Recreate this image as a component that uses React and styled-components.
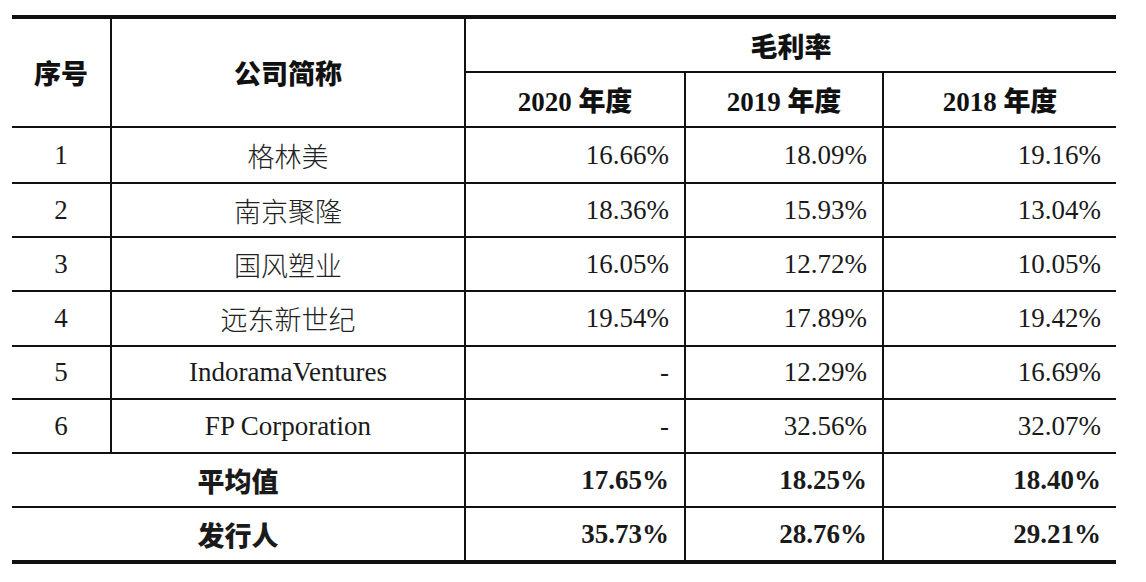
import React from "react";
import styled, { createGlobalStyle } from "styled-components";

const GlobalStyle = createGlobalStyle`
  html, body {
    margin: 0;
    padding: 0;
    background: #fff;
  }
`;

const Page = styled.div`
  padding: 15px 0 0 12px;
  width: 1146px;
  height: 582px;
  box-sizing: border-box;
  overflow: hidden;
`;

const Table = styled.table`
  width: 1104px;
  table-layout: fixed;
  border-collapse: collapse;
  border-top: 4px solid #111;
  border-bottom: 4px solid #111;
  font-family: "Liberation Serif", "Noto Sans CJK SC", serif;
  font-size: 27px;
  color: #1a1a1a;
`;

const Row = styled.tr`
  height: ${(p) => p.h || 54}px;
`;

const Cell = styled.td`
  border: 2px solid #111;
  padding: 0 ${(p) => (p.align === "right" ? "15px" : "0")} 0 0;
  text-align: ${(p) => p.align || "center"};
  font-weight: ${(p) => (p.bold ? 700 : 400)};
  white-space: nowrap;
  &:first-child {
    border-left: none;
  }
  &:last-child {
    border-right: none;
  }
`;

const HeadCell = styled.th`
  border: 2px solid #111;
  padding: 0;
  text-align: center;
  font-family: "Liberation Serif", "Noto Sans CJK SC", sans-serif;
  font-weight: 700;
  color: #111;
  &:first-child {
    border-left: none;
  }
  &:last-child {
    border-right: none;
  }
`;

const Hei = styled.span`
  font-family: "Noto Sans CJK SC", sans-serif;
  font-weight: 900;
`;

const Song = styled.span`
  font-family: "Noto Sans CJK SC", sans-serif;
  font-weight: 300;
  color: #222;
`;

const rows = [
  { h: 56, c: ["1", "格林美", "16.66%", "18.09%", "19.16%"] },
  { h: 54, c: ["2", "南京聚隆", "18.36%", "15.93%", "13.04%"] },
  { h: 54, c: ["3", "国风塑业", "16.05%", "12.72%", "10.05%"] },
  { h: 55, c: ["4", "远东新世纪", "19.54%", "17.89%", "19.42%"] },
  { h: 53, c: ["5", "IndoramaVentures", "-", "12.29%", "16.69%"] },
  { h: 54, c: ["6", "FP Corporation", "-", "32.56%", "32.07%"] },
];

const totals = [
  { h: 54, c: ["平均值", "17.65%", "18.25%", "18.40%"] },
  { h: 55, c: ["发行人", "35.73%", "28.76%", "29.21%"] },
];

const isLatin = (s) => /^[A-Za-z ]+$/.test(s);

export default function App() {
  return (
    <Page>
      <GlobalStyle />
      <Table>
        <colgroup>
          <col style={{ width: 99 }} />
          <col style={{ width: 354 }} />
          <col style={{ width: 220 }} />
          <col style={{ width: 198 }} />
          <col style={{ width: 233 }} />
        </colgroup>
        <thead>
          <Row h={55}>
            <HeadCell rowSpan={2}>
              <Hei>序号</Hei>
            </HeadCell>
            <HeadCell rowSpan={2}>
              <Hei>公司简称</Hei>
            </HeadCell>
            <HeadCell colSpan={3}>
              <Hei>毛利率</Hei>
            </HeadCell>
          </Row>
          <Row h={55}>
            <HeadCell>
              2020 <Hei>年度</Hei>
            </HeadCell>
            <HeadCell>
              2019 <Hei>年度</Hei>
            </HeadCell>
            <HeadCell>
              2018 <Hei>年度</Hei>
            </HeadCell>
          </Row>
        </thead>
        <tbody>
          {rows.map(({ h, c }) => (
            <Row key={c[0]} h={h}>
              <Cell>{c[0]}</Cell>
              <Cell>{isLatin(c[1]) ? c[1] : <Song>{c[1]}</Song>}</Cell>
              <Cell align="right">{c[2]}</Cell>
              <Cell align="right">{c[3]}</Cell>
              <Cell align="right">{c[4]}</Cell>
            </Row>
          ))}
          {totals.map(({ h, c }) => (
            <Row key={c[0]} h={h}>
              <Cell colSpan={2}>
                <Hei>{c[0]}</Hei>
              </Cell>
              <Cell align="right" bold>
                {c[1]}
              </Cell>
              <Cell align="right" bold>
                {c[2]}
              </Cell>
              <Cell align="right" bold>
                {c[3]}
              </Cell>
            </Row>
          ))}
        </tbody>
      </Table>
    </Page>
  );
}
